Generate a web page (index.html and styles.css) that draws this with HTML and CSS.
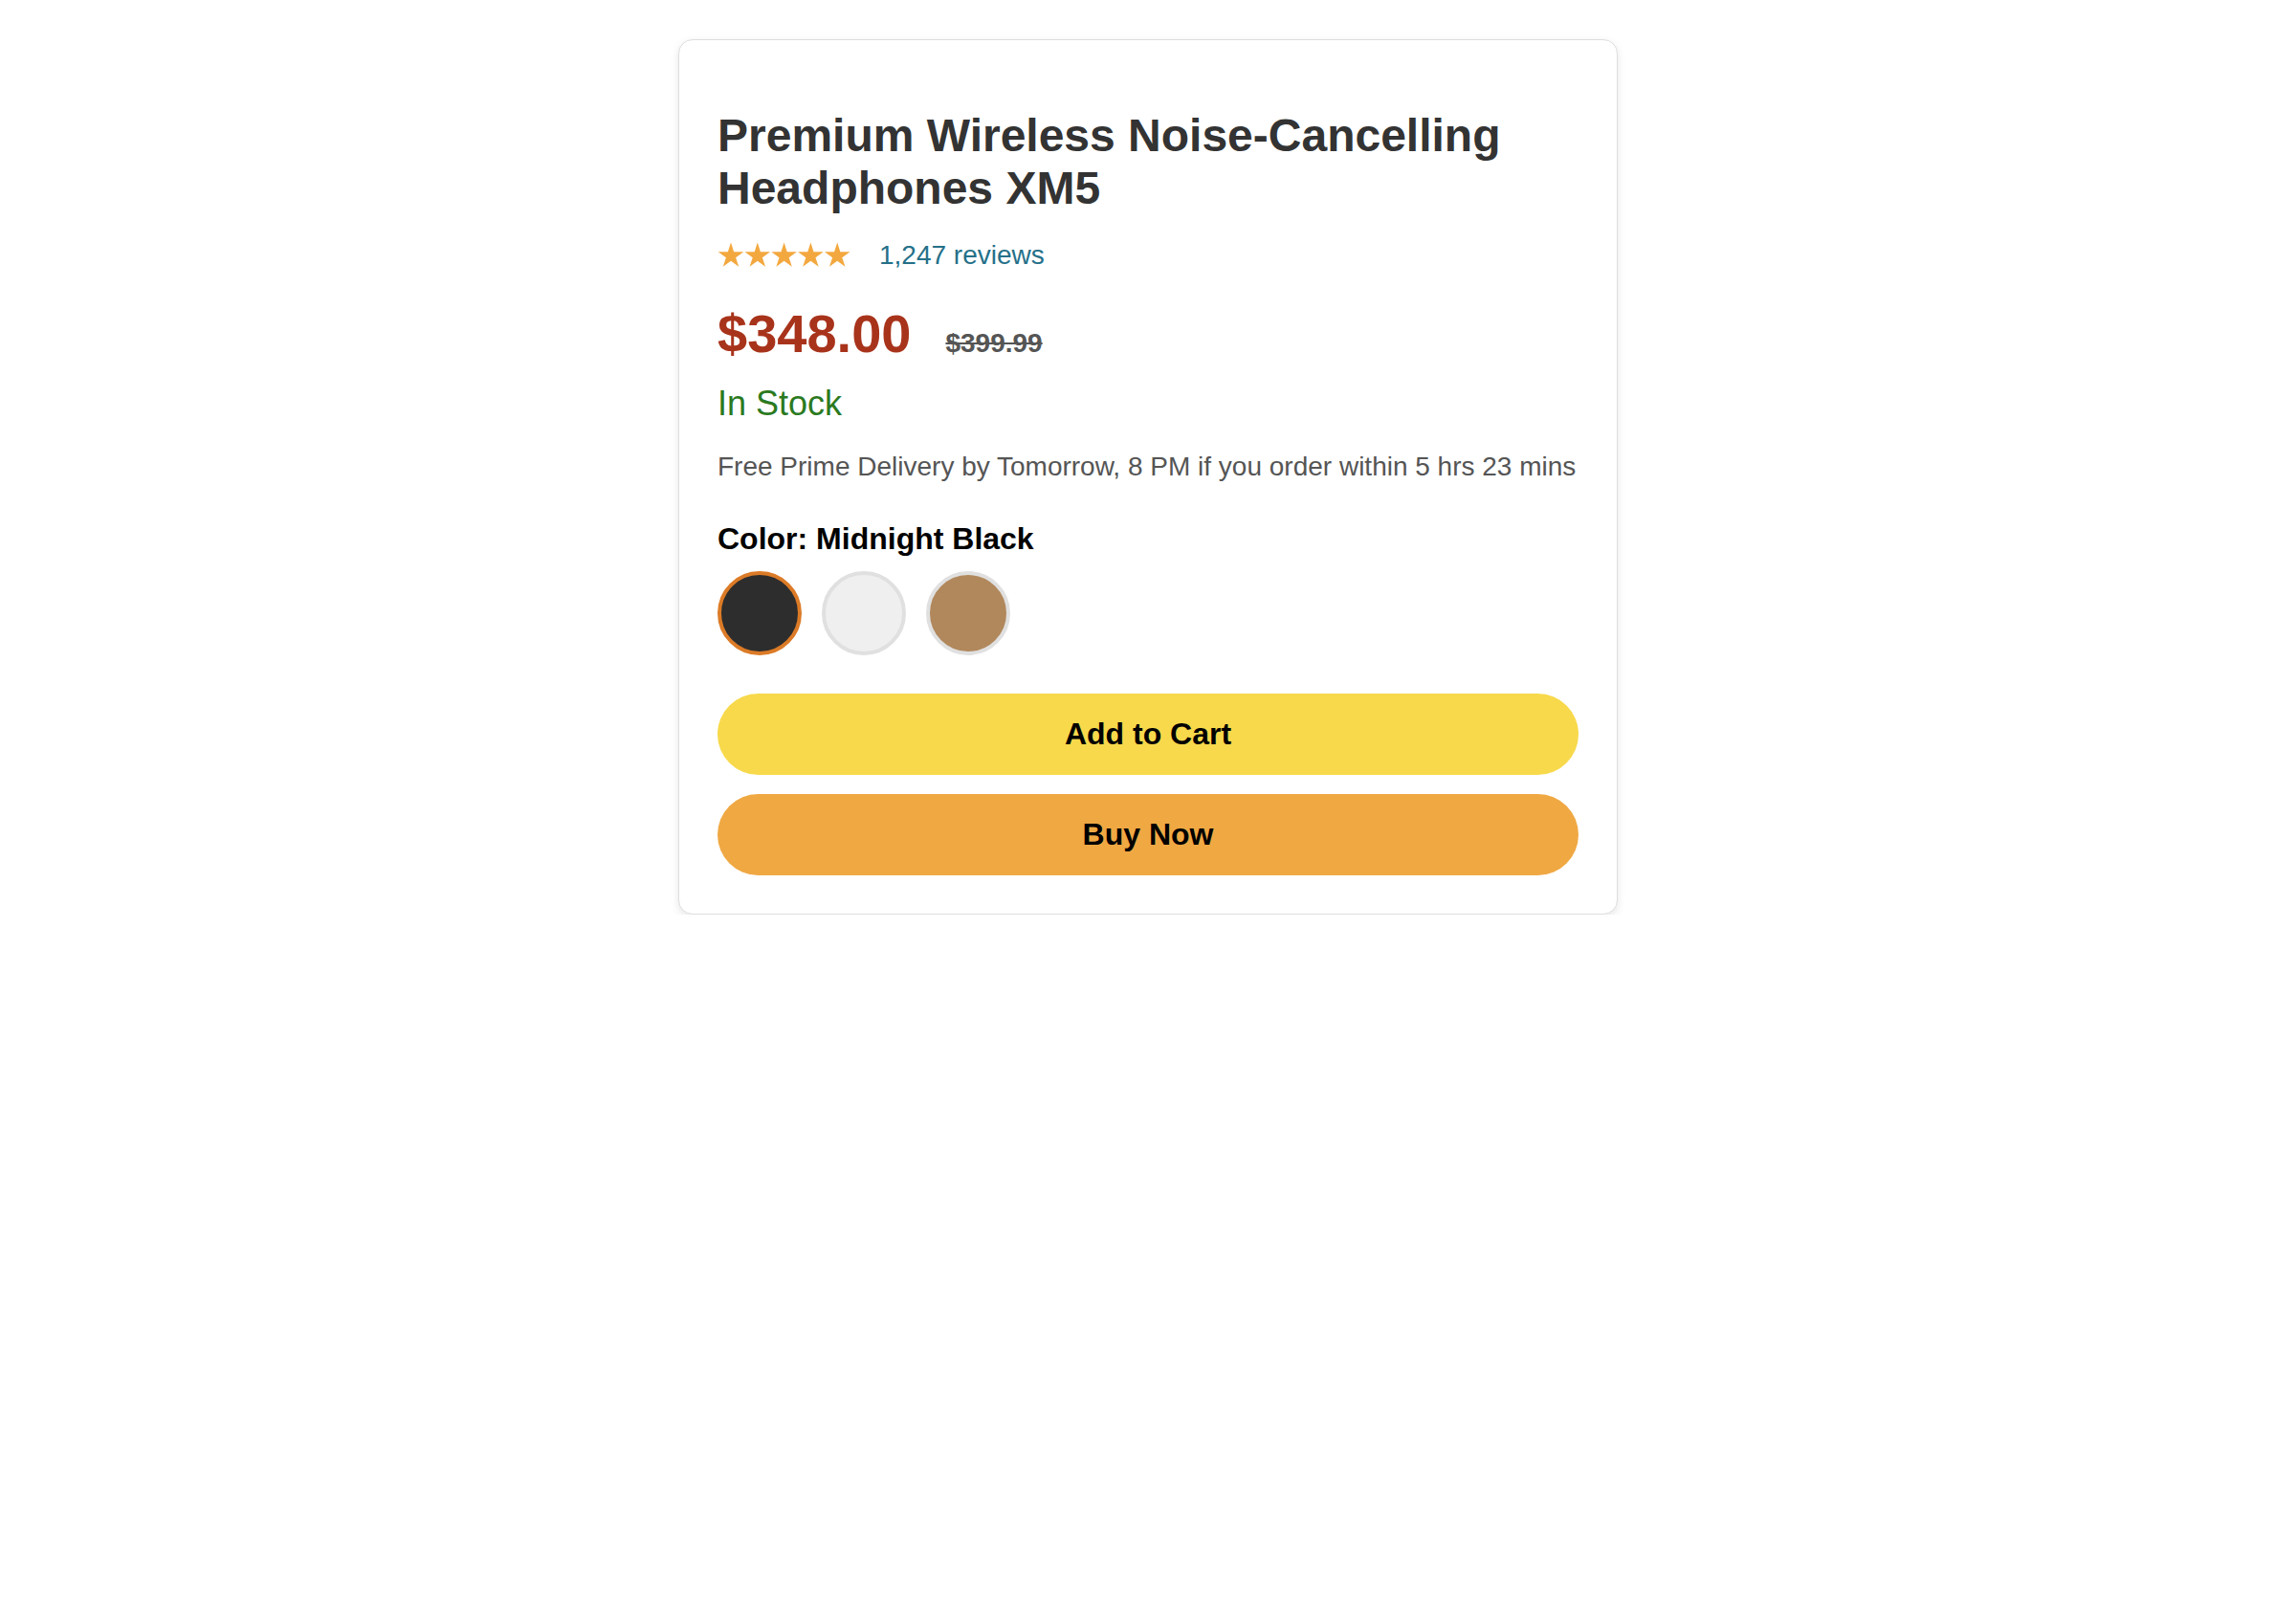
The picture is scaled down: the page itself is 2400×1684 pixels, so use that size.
FILE: index.html
```html
<!DOCTYPE html>
<html lang="en">
<head>
<meta charset="utf-8">
<title>Premium Wireless Noise-Cancelling Headphones XM5</title>
<link rel="stylesheet" href="styles.css">
</head>
<body>
<div class="page">
  <div class="card">
    <h1 class="title">Premium Wireless Noise-Cancelling Headphones XM5</h1>
    <div class="rating">
      <svg class="stars" width="139" height="26" viewBox="0 0 139 26" aria-label="5 stars">
        <defs>
          <polygon id="star" points="14,0.5 17.14,10.17 27.31,10.17 19.09,16.15 22.23,25.83 14,19.85 5.77,25.83 8.91,16.15 0.69,10.17 10.86,10.17"/>
        </defs>
        <use href="#star" x="0" fill="#f3a83f"/>
        <use href="#star" x="27.8" fill="#f3a83f"/>
        <use href="#star" x="55.6" fill="#f3a83f"/>
        <use href="#star" x="83.4" fill="#f3a83f"/>
        <use href="#star" x="111.2" fill="#f3a83f"/>
      </svg>
      <a class="reviews" href="#">1,247 reviews</a>
    </div>
    <div class="price-row">
      <span class="price">$348.00</span>
      <span class="old-price">$399.99</span>
    </div>
    <div class="stock">In Stock</div>
    <div class="delivery">Free Prime Delivery by Tomorrow, 8 PM if you order within 5 hrs 23 mins</div>
    <div class="color-label">Color: Midnight Black</div>
    <div class="swatches">
      <span class="swatch swatch-black selected"></span>
      <span class="swatch swatch-white"></span>
      <span class="swatch swatch-tan"></span>
    </div>
    <button class="btn btn-cart">Add to Cart</button>
    <button class="btn btn-buy">Buy Now</button>
  </div>
</div>
</body>
</html>
```

FILE: styles.css
```css
html, body {
  margin: 0;
  padding: 0;
  background: #ffffff;
}

body {
  font-family: "Liberation Sans", Arial, Helvetica, sans-serif;
}

.page {
  padding-top: 41px;
}

.card {
  box-sizing: border-box;
  width: 982px;
  margin: 0 auto;
  padding: 40px;
  border: 1px solid #dedede;
  border-radius: 15px;
  background: #fff;
  box-shadow: 0 3px 9px rgba(0, 0, 0, 0.1);
  display: flex;
  flex-direction: column;
}

.title {
  margin: 32px 0 0;
  font-size: 48px;
  line-height: 55px;
  font-weight: bold;
  color: #333333;
}

.rating {
  display: flex;
  align-items: center;
  gap: 30px;
  margin-top: 25px;
  height: 36px;
}

.stars {
  display: block;
  margin-top: -2px;
}

.reviews {
  font-size: 28px;
  line-height: 36px;
  color: #257089;
  text-decoration: none;
}

.price-row {
  display: flex;
  align-items: baseline;
  margin-top: 32px;
}

.price {
  font-size: 56px;
  line-height: 64px;
  font-weight: bold;
  color: #a8331b;
}

.old-price {
  margin-left: 36px;
  font-size: 28px;
  font-weight: bold;
  color: #555555;
  text-decoration: line-through;
}

.stock {
  margin-top: 20px;
  font-size: 36px;
  line-height: 42px;
  color: #2b7a1f;
}

.delivery {
  margin-top: 27px;
  font-size: 28px;
  line-height: 36px;
  color: #555555;
}

.color-label {
  margin-top: 37px;
  font-size: 32px;
  line-height: 40px;
  font-weight: bold;
  color: #000;
}

.swatches {
  display: flex;
  gap: 21px;
  margin-top: 14px;
}

.swatch {
  box-sizing: border-box;
  width: 88px;
  height: 88px;
  border-radius: 50%;
  border: 4px solid #e0e0e0;
}

.swatch-black {
  background: #2d2d2d;
}

.swatch-white {
  background: #efefef;
}

.swatch-tan {
  background: #b1885c;
}

.swatch.selected {
  border-color: #dc7b27;
}

.btn {
  display: block;
  width: 100%;
  height: 85px;
  border: none;
  border-radius: 43px;
  font-family: inherit;
  font-size: 32px;
  font-weight: bold;
  color: #000;
  cursor: pointer;
}

.btn-cart {
  margin-top: 40px;
  background: #f7d94b;
}

.btn-buy {
  margin-top: 20px;
  background: #f0a843;
}
```
